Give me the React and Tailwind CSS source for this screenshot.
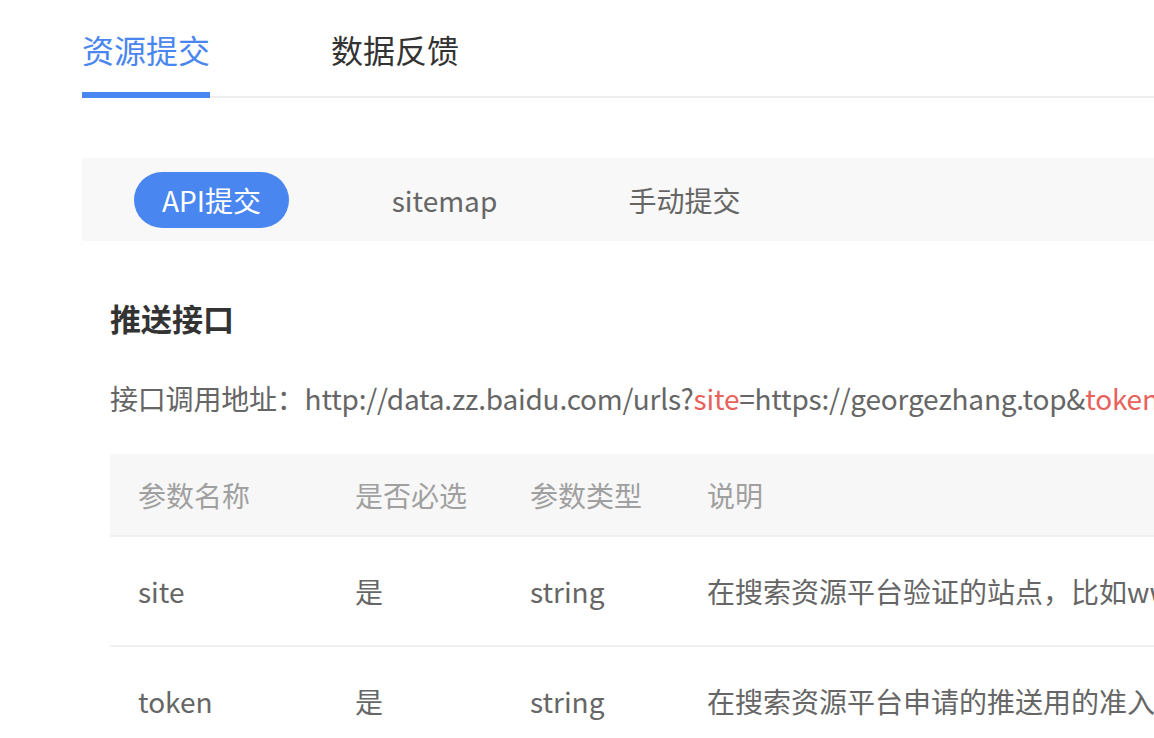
import { useState } from "react";

const subTabs = ["API提交", "sitemap", "手动提交"];

const rows = [
  { name: "site", required: "是", type: "string", desc: "在搜索资源平台验证的站点，比如www.example.com" },
  { name: "token", required: "是", type: "string", desc: "在搜索资源平台申请的推送用的准入密钥" },
];

export default function App() {
  const [tab, setTab] = useState(0);
  const [sub, setSub] = useState(0);

  return (
    <div className="w-[1154px] h-[738px] overflow-hidden bg-white font-['Noto_Sans_CJK_SC','Noto_Sans',sans-serif]">
      <div className="pl-[82px] w-[1400px]">
        {/* 顶部标签 */}
        <div className="flex border-b-2 border-[#eeeeee] pt-[25px]">
          {["资源提交", "数据反馈"].map((t, i) => (
            <button
              key={t}
              onClick={() => setTab(i)}
              className={`text-[32px] leading-[48px] pb-[19px] mb-[-2px] border-b-[6px] ${
                i === tab ? "text-[#4a86ef] border-[#4a86ef]" : "text-[#333] border-transparent"
              } ${i === 1 ? "ml-[121px]" : ""}`}
            >
              {t}
            </button>
          ))}
        </div>

        {/* 提交方式 */}
        <div className="mt-[60px] h-[83px] bg-[#f8f8f8] flex items-center pl-[52px]">
          {subTabs.map((t, i) => (
            <button
              key={t}
              onClick={() => setSub(i)}
              className={`w-[155px] h-[56px] rounded-full text-[28px] leading-none ${
                i === sub ? "bg-[#4a86ef] text-white" : "text-[#666]"
              } ${i === 1 ? "ml-[78px]" : ""} ${i === 2 ? "ml-[85px]" : ""}`}
            >
              {t}
            </button>
          ))}
        </div>

        <div className="pl-[28px]">
          <h2 className="mt-[57px] text-[31px] leading-[40px] font-bold text-[#333]">推送接口</h2>
          <p className="mt-[40px] text-[28px] leading-[40px] text-[#666] whitespace-nowrap tracking-[-0.2px]">
            接口调用地址：http://data.zz.baidu.com/urls?<span className="text-[#e8625d]">site</span>
            =https://georgezhang.top&<span className="text-[#e8625d]">token</span>=AbCdEfGh1234
          </p>

          {/* 参数表 */}
          <div className="mt-[36px] text-[28px] whitespace-nowrap">
            <div className="grid grid-cols-[217px_175px_177px_1fr] h-[83px] items-center bg-[#f7f7f7] border-b-2 border-[#f0f0f0] text-[#a0a0a0]">
              <div className="pl-[28px]">参数名称</div>
              <div className="pl-[28px]">是否必选</div>
              <div className="pl-[28px]">参数类型</div>
              <div className="pl-[28px]">说明</div>
            </div>
            {rows.map((r) => (
              <div
                key={r.name}
                className="grid grid-cols-[217px_175px_177px_1fr] h-[110px] items-center border-b-2 border-[#f0f0f0] text-[#666]"
              >
                <div className="pl-[28px]">{r.name}</div>
                <div className="pl-[28px]">{r.required}</div>
                <div className="pl-[28px]">{r.type}</div>
                <div className="pl-[28px]">{r.desc}</div>
              </div>
            ))}
          </div>
        </div>
      </div>
    </div>
  );
}
